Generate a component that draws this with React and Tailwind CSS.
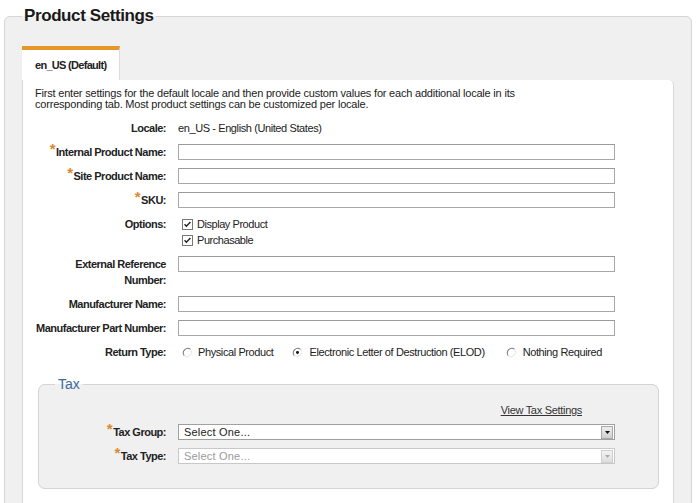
import React from "react";

const F = { fontFamily: '"Liberation Sans", Arial, sans-serif' };

function Req() {
  return (
    <span className="text-[#d98a2b] text-[15px] leading-[10px] align-[2px] mr-[1px] font-bold">*</span>
  );
}

function Label({ children, req }) {
  return (
    <div className="text-right font-bold text-[11px] tracking-[-0.5px] leading-[16px] text-[#222]">
      {req && <Req />}
      {children}
    </div>
  );
}

function TextInput() {
  return <div className="h-[16px] border border-[#a8a8a8] border-t-[#999] bg-white" />;
}

function Checkbox() {
  return (
    <svg width="11" height="11" viewBox="0 0 11 11" className="shrink-0">
      <rect x="0.5" y="0.5" width="10" height="10" fill="#fff" stroke="#777" />
      <path d="M2.6 5.2 L4.4 7.3 L8.4 3" fill="none" stroke="#222" strokeWidth="1.4" />
    </svg>
  );
}

function Radio({ on }) {
  return (
    <svg width="11" height="11" viewBox="0 0 12 12" className="shrink-0">
      <circle cx="6" cy="6" r="5" fill="#fff" />
      <path d="M9.5 2.5 A5 5 0 0 0 2.5 9.5" fill="none" stroke="#7a7a7a" strokeWidth="1.1" />
      <path d="M2.5 9.5 A5 5 0 0 0 9.5 2.5" fill="none" stroke="#e2e2e2" strokeWidth="1" />
      {on && <circle cx="6" cy="6" r="1.6" fill="#111" />}
    </svg>
  );
}

function Select({ disabled }) {
  return (
    <div
      className={
        "h-[16px] flex items-center bg-white border " +
        (disabled ? "border-[#c8c8c8]" : "border-[#a0a0a0]")
      }
    >
      <span
        className={
          "flex-1 pl-[5px] text-[11px] leading-[14px] tracking-[0.2px] " +
          (disabled ? "text-[#9a9a9a]" : "text-[#222]")
        }
      >
        Select One...
      </span>
      <div
        className={
          "w-[12px] h-[13px] mr-[1px] flex items-center justify-center border bg-gradient-to-b " +
          (disabled
            ? "border-[#d0d0d0] from-[#f2f2f2] to-[#dedede]"
            : "border-[#a8a8a8] from-[#eeeeee] to-[#cfcfcf]")
        }
      >
        <svg width="5" height="3" viewBox="0 0 5 3">
          <path d="M0 0 H5 L2.5 3 Z" fill={disabled ? "#aaa" : "#111"} />
        </svg>
      </div>
    </div>
  );
}

export default function App() {
  return (
    <div className="bg-white w-[696px] h-[503px] overflow-hidden text-[#222]" style={F}>
      <fieldset className="ml-[4px] mt-[6px] w-[688px] border border-[#d6d6d6] rounded-[6px] bg-[#f0f0f0] px-[17px] pt-[20px] pb-[20px]">
        <legend className="px-[2px] text-[17px] leading-[20px] font-bold tracking-[-0.4px] text-[#1a1a1a]">
          Product Settings
        </legend>

        {/* tab */}
        <div className="w-[98px] border-t-[4px] border-[#e8962a] bg-white h-[34px] flex items-center pl-[13px] border-r border-r-[#dcdcdc]">
          <span className="text-[11px] font-bold tracking-[-0.7px]">en_US (Default)</span>
        </div>

        {/* panel */}
        <div className="bg-white rounded-tr-[5px] border-r border-l border-[#d8d8d8] pl-[12px] pt-[8px] pb-[60px]">
          <p className="text-[11px] leading-[11px] tracking-[-0.2px] text-[#222] w-[485px]">
            First enter settings for the default locale and then provide custom values for each additional locale in its
            corresponding tab. Most product settings can be customized per locale.
          </p>

          <div className="mt-[10px] grid grid-cols-[131px_437px] gap-x-[12px] gap-y-[8px] items-start">
            <Label>Locale:</Label>
            <div className="text-[11px] leading-[16px] tracking-[-0.4px]">en_US - English (United States)</div>

            <Label req>Internal Product Name:</Label>
            <TextInput />

            <Label req>Site Product Name:</Label>
            <TextInput />

            <Label req>SKU:</Label>
            <TextInput />

            <Label>Options:</Label>
            <div className="flex flex-col pl-[4px] text-[11px] tracking-[-0.45px]">
              <div className="flex items-center gap-[4px] h-[16px]">
                <Checkbox />
                <span>Display Product</span>
              </div>
              <div className="flex items-center gap-[4px] h-[16px]">
                <Checkbox />
                <span>Purchasable</span>
              </div>
            </div>

            <Label>
              External Reference
              <br />
              Number:
            </Label>
            <TextInput />

            <Label>Manufacturer Name:</Label>
            <TextInput />

            <Label>Manufacturer Part Number:</Label>
            <TextInput />

            <Label>Return Type:</Label>
            <div className="flex items-center h-[16px] text-[11px] tracking-[-0.4px] pl-[4px] whitespace-nowrap">
              <Radio />
              <span className="ml-[5px]">Physical Product</span>
              <span className="ml-[18px] flex"><Radio on /></span>
              <span className="ml-[7px]">Electronic Letter of Destruction (ELOD)</span>
              <span className="ml-[21px] flex"><Radio /></span>
              <span className="ml-[6px]">Nothing Required</span>
            </div>
          </div>

          {/* Tax */}
          <fieldset className="mt-[16px] ml-[3px] w-[621px] border border-[#d4d4d4] rounded-[7px] bg-[#f0f0f0] px-[16px] pt-[10px] pb-[24px]">
            <legend className="px-[3px] text-[14px] leading-[16px] text-[#3a6aa0]">Tax</legend>
            <div className="grid grid-cols-[111px_437px] gap-x-[12px] items-start">
              <div />
              <div className="text-right pr-[33px] h-[16px] text-[11px] leading-[16px]">
                <span className="underline text-[#333] tracking-[-0.3px]">View Tax Settings</span>
              </div>
              <div className="h-[6px] col-span-2" />
              <Label req>Tax Group:</Label>
              <Select />
              <div className="h-[8px] col-span-2" />
              <Label req>Tax Type:</Label>
              <Select disabled />
            </div>
          </fieldset>
        </div>
      </fieldset>
    </div>
  );
}
